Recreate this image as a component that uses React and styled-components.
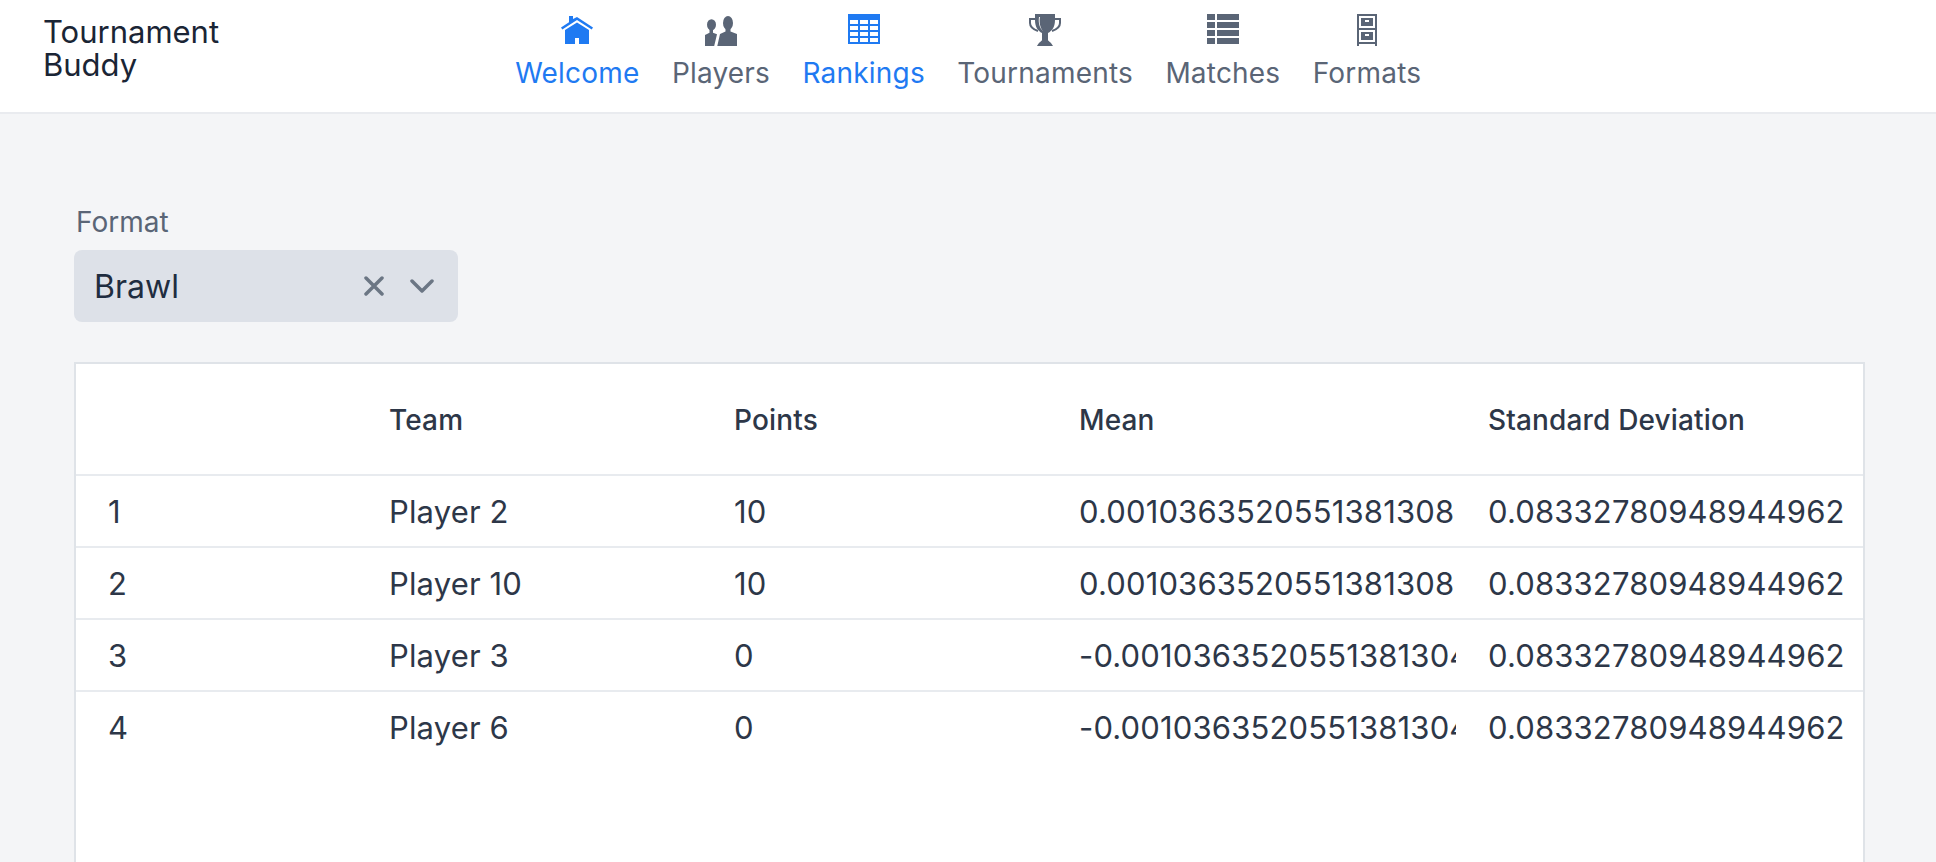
import styled, { createGlobalStyle } from "styled-components";

const GlobalStyle = createGlobalStyle`
  html, body {
    margin: 0;
    height: 100%;
    overflow: hidden;
    background: #f4f5f7;
    font-family: Inter, "Liberation Sans", sans-serif;
    color: #2d3748;
  }
`;

const Header = styled.header`
  display: flex;
  height: 112px;
  background: #fff;
  border-bottom: 2px solid #e9ebef;
`;

const Logo = styled.div`
  width: 499px;
  box-sizing: border-box;
  padding: 15px 0 0 43px;
  font-size: 31px;
  line-height: 33px;
  color: #1a2535;
`;

const LogoText = styled.div`
  width: 200px;
`;

const Nav = styled.nav`
  display: flex;
`;

const NavItem = styled.a`
  display: flex;
  flex-direction: column;
  align-items: center;
  padding: 14px 16.2px 0;
  font-size: 28px;
  line-height: 40px;
  letter-spacing: 0.2px;
  color: ${(p) => (p.$active ? "#1f7af2" : "#5a6576")};
`;

const IconSlot = styled.div`
  display: flex;
  justify-content: center;
  height: 32px;
  margin-bottom: 7px;
`;

const Main = styled.main`
  padding: 90px 71px 0 74px;
`;

const FieldLabel = styled.label`
  display: block;
  padding-left: 2px;
  font-size: 28px;
  line-height: 36px;
  margin-bottom: 10px;
  color: #5a6576;
`;

const Select = styled.div`
  display: flex;
  align-items: center;
  width: 384px;
  height: 72px;
  padding: 0 24px 0 20px;
  box-sizing: border-box;
  border-radius: 8px;
  background: #dde1e8;
  font-size: 32px;
  color: #1f2d40;
`;

const SelectValue = styled.span`
  flex: 1;
`;

const SelectIcons = styled.div`
  display: flex;
  align-items: center;
  gap: 26px;
  color: #6b7684;
`;

const TablePanel = styled.div`
  height: 600px;
  margin-top: 40px;
  border: 2px solid #dfe3e8;
  background: #fff;
`;

const Table = styled.table`
  width: 100%;
  table-layout: fixed;
  border-collapse: collapse;
`;

const HeadRow = styled.tr`
  height: 111px;
  border-bottom: 2px solid #e8ebef;
`;

const Row = styled.tr`
  height: 72px;
  border-bottom: 2px solid #e8ebef;

  &:last-child {
    border-bottom: none;
  }
`;

const HeadCell = styled.th`
  padding: 2px 0 0 32px;
  text-align: left;
  font-size: 28px;
  font-weight: 500;
  letter-spacing: 0.15px;
  color: #2d3748;
`;

const Cell = styled.td`
  padding: 0 0 0 32px;
  overflow: hidden;
  white-space: nowrap;
  font-size: 31px;
  letter-spacing: 0.15px;
  color: #2d3748;
`;

const HomeIcon = () => (
  <svg width="32" height="32" viewBox="0 0 32 32" fill="currentColor">
    <path d="M8 2h4v3l4-2 16 10.4-1.3 2L16 6 1.3 15.4 0 13.4l8-5.2z" />
    <path d="M16 8.5 28 16v14H18v-6h-4v6H4V16z" />
  </svg>
);

const PlayersIcon = () => (
  <svg width="32" height="32" viewBox="0 0 32 32" fill="currentColor">
    <ellipse cx="6.5" cy="10.8" rx="4.5" ry="5.6" />
    <path d="M0 32V21l4.5-2.2V15h3.5v3.8l4 1.5L9.2 32z" />
    <ellipse cx="23" cy="9" rx="5" ry="7" />
    <path d="M12.3 32 15 20l5.5-2.5v-8h5v8L32 20v12z" />
  </svg>
);

const RankingsIcon = () => (
  <svg width="32" height="30" viewBox="0 0 32 30" fill="currentColor" fillRule="evenodd">
    <path d="M0 0h32v30H0zM2 6v4h8V6zm10 0v4h8V6zm10 0v4h8V6zM2 12v4h8v-4zm10 0v4h8v-4zm10 0v4h8v-4zM2 18v4h8v-4zm10 0v4h8v-4zm10 0v4h8v-4zM2 24v4h8v-4zm10 0v4h8v-4zm10 0v4h8v-4z" />
  </svg>
);

const TrophyIcon = () => (
  <svg width="32" height="32" viewBox="0 0 32 32">
    <path
      d="M7 5H1v4c0 5 5 7 8 8M25 5h6v4c0 5-5 7-8 8"
      fill="none"
      stroke="currentColor"
      strokeWidth="2"
    />
    <path
      fill="currentColor"
      d="M6 0h20v6c0 7-3 11-7 13v7c0 1 3 2 5 6H8c2-4 5-5 5-6v-7C9 17 6 13 6 6z"
    />
    <path d="M11 3c-1 5 0 11 3 14-3-2-5-8-4-14z" fill="#fff" />
  </svg>
);

const MatchesIcon = () => (
  <svg width="32" height="30" viewBox="0 0 32 30" fill="currentColor">
    <path d="M0 0h8v6H0zM10 0h22v6H10zM0 8h8v6H0zM10 8h22v6H10zM0 16h8v6H0zM10 16h22v6H10zM0 24h8v6H0zM10 24h22v6H10z" />
  </svg>
);

const FormatsIcon = () => (
  <svg width="20" height="32" viewBox="0 0 20 32" fill="currentColor" fillRule="evenodd">
    <path d="M0 0h20v32h-2v-2H2v2H0zM2 2v12h16V2zm0 14v12h16V16z" />
    <path d="M4 4h12v8H4zm4 2v2h4V6z" />
    <path d="M4 18h12v8H4zm4 2v2h4v-2z" />
  </svg>
);

const CloseIcon = () => (
  <svg width="20" height="20" viewBox="0 0 20 20" fill="none" stroke="currentColor" strokeWidth="3.5" strokeLinecap="round">
    <path d="M2 2l16 16M18 2 2 18" />
  </svg>
);

const ChevronIcon = () => (
  <svg width="24" height="14" viewBox="0 0 24 14" fill="none" stroke="currentColor" strokeWidth="3.5" strokeLinecap="round" strokeLinejoin="round">
    <path d="M2 2l10 10 10-10" />
  </svg>
);

const navItems = [
  { label: "Welcome", icon: <HomeIcon />, active: true },
  { label: "Players", icon: <PlayersIcon /> },
  { label: "Rankings", icon: <RankingsIcon />, active: true },
  { label: "Tournaments", icon: <TrophyIcon /> },
  { label: "Matches", icon: <MatchesIcon /> },
  { label: "Formats", icon: <FormatsIcon /> },
];

const rows = [
  [1, "Player 2", 10, "0.0010363520551381308", "0.08332780948944962"],
  [2, "Player 10", 10, "0.0010363520551381308", "0.08332780948944962"],
  [3, "Player 3", 0, "-0.0010363520551381304", "0.08332780948944962"],
  [4, "Player 6", 0, "-0.0010363520551381304", "0.08332780948944962"],
];

function App() {
  return (
    <>
      <GlobalStyle />
      <Header>
        <Logo>
          <LogoText>Tournament Buddy</LogoText>
        </Logo>
        <Nav>
          {navItems.map((item) => (
            <NavItem key={item.label} $active={item.active}>
              <IconSlot>{item.icon}</IconSlot>
              {item.label}
            </NavItem>
          ))}
        </Nav>
      </Header>
      <Main>
        <FieldLabel>Format</FieldLabel>
        <Select>
          <SelectValue>Brawl</SelectValue>
          <SelectIcons>
            <CloseIcon />
            <ChevronIcon />
          </SelectIcons>
        </Select>
        <TablePanel>
          <Table>
            <colgroup>
              <col style={{ width: 281 }} />
              <col style={{ width: 345 }} />
              <col style={{ width: 345 }} />
              <col style={{ width: 409 }} />
              <col />
            </colgroup>
            <thead>
              <HeadRow>
                <HeadCell />
                <HeadCell>Team</HeadCell>
                <HeadCell>Points</HeadCell>
                <HeadCell>Mean</HeadCell>
                <HeadCell>Standard Deviation</HeadCell>
              </HeadRow>
            </thead>
            <tbody>
              {rows.map((row) => (
                <Row key={row[0]}>
                  {row.map((value, i) => (
                    <Cell key={i}>{value}</Cell>
                  ))}
                </Row>
              ))}
            </tbody>
          </Table>
        </TablePanel>
      </Main>
    </>
  );
}

export default App;
